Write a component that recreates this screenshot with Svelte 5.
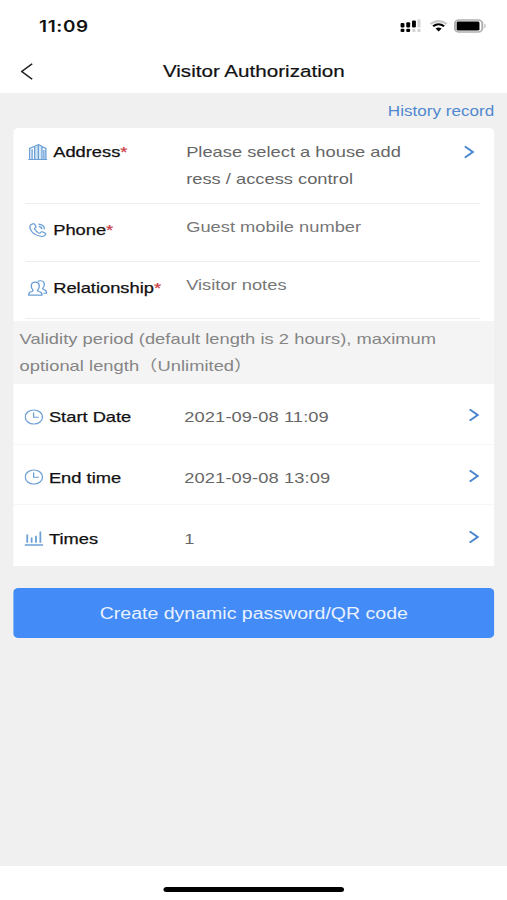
<script>
    let guest = [
        { icon: "building", label: "Address", value: "Please select a house add\nress / access control", link: true },
        { icon: "phone", label: "Phone", value: "Guest mobile number" },
        { icon: "people", label: "Relationship", value: "Visitor notes" }
    ];

    let validity = [
        { icon: "clock", label: "Start Date", value: "2021-09-08 11:09" },
        { icon: "clock", label: "End time", value: "2021-09-08 13:09" },
        { icon: "bars", label: "Times", value: "1" }
    ];
</script>

{#snippet icon(name)}
    <svg class="icon" viewBox="0 0 16 18">
        {#if name === "building"}
            <path class="tint" d="M5.5 16V3.2L8.4 1.6l2.6 1.6V16z" />
            <path d="M.2 16.5h15.6M1.3 16V5.4l3.6-1.9M5.4 16V3.3l3-1.7V16M8.4 1.6l3 1.7V16M11.6 3.7l3 1.7V16M3.3 6.2V16M13 7v9" />
        {:else if name === "phone"}
            <path d="M2.3 3.7 4 2.7q.7-.3 1.2.4l1.3 2.3q.3.7-.3 1.2l-.8.7q-.3.4 0 1 1.3 2.5 3.5 3.8.5.3.9-.1l.8-1q.5-.5 1.1-.2l2.4 1.4q.6.5.3 1.2-1.5 2.8-4.2 1.9Q3 13.5 1.6 7.1 1.2 4.9 2.3 3.7z" />
            <path d="M8.6 3.1q4.6.5 4.9 5.1M8.8 5.4q2.3.5 2.5 2.8" />
        {:else if name === "people"}
            <path d="M.5 16.1q-.2-2.8 2.4-3.6 1.5-.5 1-1.6Q2.6 9.400 2.600 7.100q0-4 3.300-4t3.300 4q0 2.300-1.300 3.800-.5 1.100 1 1.600 2.700.8 2.500 3.600z" />
            <path d="M8 2.500q1.100-.9 2.500-.7 3 .4 2.800 3.900-.1 2-1.200 3.300-.5 1 .8 1.500 2.400.8 2.300 3.700h-2.700" />
        {:else if name === "clock"}
            <circle cx="8" cy="9" r="7.3" />
            <path d="M7.800 4.400v4.900h4.400" />
        {:else}
            <path class="thick" d="M.2 16.300h15.600" />
            <path class="thick" d="M2.400 5.300v8.700M6.100 8.600v5.400M9.800 6.600v7.400M13.500 2.300v11.700" />
        {/if}
    </svg>
{/snippet}

{#snippet arrow()}
    <svg class="arrow" viewBox="0 0 9 14"><path d="M1 1.4 7.6 7 1 12.6" /></svg>
{/snippet}

<div class="screen">
    <div class="status">
        <span class="time">11:09</span>
        <svg class="signal" viewBox="0 0 17 14">
            <rect x=".3" y="4" width="3.2" height="4.4" rx="1" />
            <rect x="5" y="3.2" width="3.2" height="5.2" rx="1" />
            <rect x="9.7" y="1.4" width="3.2" height="7" rx="1" />
            <rect x=".3" y="9.700" width="3.2" height="3.300" rx="1" />
            <rect x="5" y="9.700" width="3.2" height="3.300" rx="1" />
            <path class="dim" d="M14.200.4h2.500v8h-2.500zM10 9.900h2.500v3H10zM14.200 9.900h2.500v3h-2.500z" />
        </svg>
        <svg class="wifi" viewBox="0 0 15 12">
            <path class="dim-line" d="M.8 4Q7.5-1.8 14.2 4" />
            <path class="line" d="M3 6.2q4.5-3.8 9 0" />
            <path d="M5 8.6q2.5-2 5 0L7.5 11.5z" />
        </svg>
        <svg class="battery" viewBox="0 0 27 14">
            <rect class="shell" x=".9" y="1" width="22.4" height="12" rx="3.3" />
            <rect x="2.3" y="2.400" width="18.700" height="9.200" rx="1.400" />
            <path class="dim" d="M24.600 4.500q2 .9 2 2.500t-2 2.500z" />
        </svg>
    </div>

    <header>
        <svg class="back" viewBox="0 0 10 17"><path d="M9.4.7.8 8.5l8.6 7.8" /></svg>
        <h1>Visitor Authorization</h1>
    </header>

    <main>
        <div class="history"><a href="#history">History record</a></div>

        <section class="card guest">
            {#each guest as row}
                <div class="row">
                    {@render icon(row.icon)}
                    <span class="label">{row.label}<i>*</i></span>
                    <span class="value">{row.value}</span>
                    {#if row.link}{@render arrow()}{/if}
                </div>
            {/each}
        </section>

        <p class="note">Validity period (default length is 2 hours), maximum<br />optional length（Unlimited）</p>

        <section class="card validity">
            {#each validity as row}
                <div class="row">
                    {@render icon(row.icon)}
                    <span class="label">{row.label}</span>
                    <span class="value">{row.value}</span>
                    {@render arrow()}
                </div>
            {/each}
        </section>

        <button>Create dynamic password/QR code</button>
    </main>

    <footer><div class="home"></div></footer>
</div>

<style>
    :global(body) {
        margin: 0;
        overflow: hidden;
    }

    /* everything is laid out narrow and widened once here */
    .screen {
        display: flex;
        flex-direction: column;
        width: calc(100vw / 1.22);
        height: 900px;
        transform: scaleX(1.22);
        transform-origin: 0 0;
        background: #fff;
        font-family: "Liberation Sans", "Noto Sans CJK SC", sans-serif;
        font-size: 15px;
    }

    svg {
        display: block;
        flex: none;
    }

    .status {
        display: flex;
        align-items: center;
        height: 52px;
        padding: 0 17px 0 32px;
        box-sizing: border-box;
    }

    .time {
        flex: 1;
        font-family: Inter, sans-serif;
        font-size: 15.5px;
        font-weight: 600;
        letter-spacing: 0.5px;
        color: #111;
    }

    .signal {
        width: 17px;
        height: 14px;
        margin-right: 7px;
    }

    .wifi {
        width: 15px;
        height: 12px;
        margin-right: 5px;
    }

    .battery {
        width: 27px;
        height: 14px;
    }

    .dim {
        fill: #d2d2d2;
    }

    .line, .dim-line, .shell {
        fill: none;
        stroke: #000;
        stroke-width: 2;
    }

    .dim-line {
        stroke: #c9c9c9;
    }

    .shell {
        stroke: #b0b0b0;
        stroke-width: 1.6;
    }

    header {
        display: flex;
        align-items: center;
        height: 41px;
        padding: 0 26.5px 3px 17px;
        box-sizing: border-box;
    }

    .back {
        width: 10px;
        height: 17px;
    }

    .back path {
        fill: none;
        stroke: #222;
        stroke-width: 1.4;
    }

    h1 {
        flex: 1;
        margin: 0;
        padding-top: 2px;
        font-size: 16.9px;
        font-weight: normal;
        text-align: center;
        color: #111;
        -webkit-text-stroke: 0.2px #111;
    }

    main {
        flex: 1;
        padding: 0 10.5px 0 11px;
        background: #f0f0f0;
    }

    .history {
        height: 35px;
        line-height: 36px;
        font-size: 14px;
        text-align: right;
    }

    .history a {
        color: #5088cf;
        text-decoration: none;
    }

    .card {
        background: #fff;
    }

    .row {
        display: flex;
        box-sizing: border-box;
        line-height: 27px;
    }

    .icon {
        width: 16px;
        height: 18px;
        fill: none;
        stroke: #6b9fd6;
        stroke-width: 1.1;
    }

    .tint {
        fill: #d3e8f5;
        stroke: none;
    }

    .thick {
        stroke-width: 1.5;
    }

    .label {
        margin-left: 4.6px;
        color: #111;
        white-space: nowrap;
        -webkit-text-stroke: 0.25px #111;
    }

    .label i {
        font-style: normal;
        color: #cb3b45;
        -webkit-text-stroke: 0.25px #cb3b45;
    }

    .value {
        flex: 1;
        color: #666;
        white-space: pre;
    }

    .arrow {
        width: 9px;
        height: 14px;
    }

    .arrow path {
        fill: none;
        stroke: #4a86cf;
        stroke-width: 1.8;
    }

    .guest {
        height: 193px;
        padding: 0 11.5px 0 10px;
        box-sizing: border-box;
        border-radius: 4px 4px 0 0;
    }

    .guest .row {
        height: 58px;
        padding: 12px 4.5px 0 2px;
        border-bottom: 1px solid #ededed;
    }

    .guest .row:first-child {
        height: 76px;
        padding-top: 10px;
    }

    .guest .row:last-child {
        height: 57px;
    }

    .guest .icon {
        margin-top: 5px;
    }

    .guest .label {
        width: 109px;
    }

    .guest .arrow {
        margin-top: 7px;
    }

    /* typed fields sit slightly above their labels */
    .guest .row:not(:first-child) .value {
        margin-top: -3px;
        color: #777;
    }

    .note {
        height: 63px;
        margin: 0;
        padding: 4px 0 0 5px;
        box-sizing: border-box;
        line-height: 27px;
        letter-spacing: 0.03px;
        color: #858585;
        background: #f4f4f4;
        white-space: nowrap;
    }

    .validity .row {
        align-items: center;
        height: 60.67px;
        padding: 5.5px 12px 0 9px;
        border-bottom: 1px solid #f6f6f6;
    }

    .validity .row:last-child {
        border-bottom: 0;
    }

    .validity .icon {
        width: 15.5px;
    }

    .validity .label {
        width: 111px;
    }

    .validity .value {
        letter-spacing: 0.07px;
    }

    .validity .arrow {
        margin-bottom: 2.5px;
    }

    button {
        display: block;
        width: 100%;
        height: 50px;
        margin-top: 22.5px;
        padding: 1px 0 0;
        border: 0;
        border-radius: 4px;
        background: #438bf6;
        font: inherit;
        font-size: 16px;
        color: #e9f2ff;
    }

    footer {
        display: flex;
        justify-content: center;
        height: 34px;
        padding-top: 21px;
        box-sizing: border-box;
    }

    .home {
        width: 148px;
        height: 5px;
        border-radius: 3px;
        background: #000;
    }
</style>
